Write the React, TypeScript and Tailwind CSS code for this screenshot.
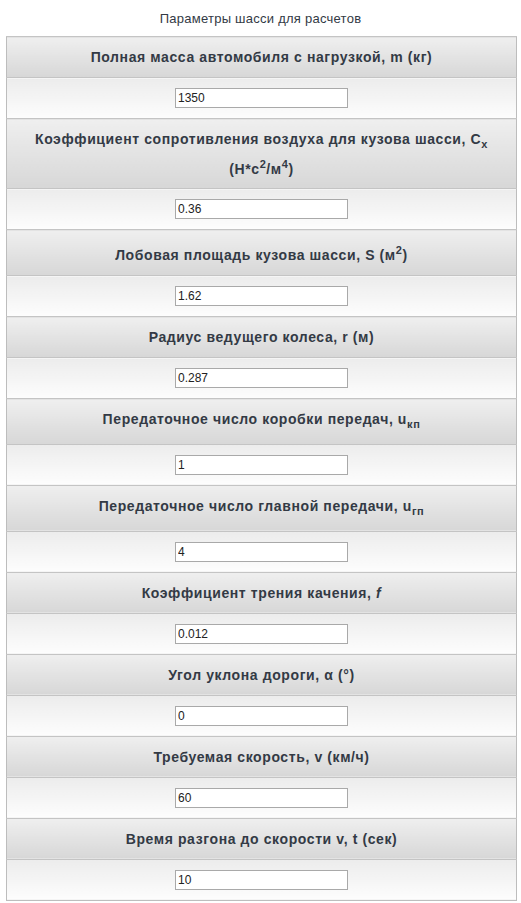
import React from "react";

type Row = { label: React.ReactNode; value: string };

const rows: Row[] = [
  { label: <>Полная масса автомобиля с нагрузкой, m (кг)</>, value: "1350" },
  {
    label: (
      <>
        Коэффициент сопротивления воздуха для кузова шасси, C<sub>x</sub>
        <br />
        (Н*с<sup>2</sup>/м<sup>4</sup>)
      </>
    ),
    value: "0.36",
  },
  { label: <>Лобовая площадь кузова шасси, S (м<sup>2</sup>)</>, value: "1.62" },
  { label: <>Радиус ведущего колеса, r (м)</>, value: "0.287" },
  { label: <>Передаточное число коробки передач, u<sub>кп</sub></>, value: "1" },
  { label: <>Передаточное число главной передачи, u<sub>гп</sub></>, value: "4" },
  { label: <>Коэффициент трения качения, <i>f</i></>, value: "0.012" },
  { label: <>Угол уклона дороги, α (°)</>, value: "0" },
  { label: <>Требуемая скорость, v (км/ч)</>, value: "60" },
  { label: <>Время разгона до скорости v, t (сек)</>, value: "10" },
];

export default function App() {
  return (
    <div className="min-h-screen bg-white font-['Liberation_Sans',Arial,sans-serif] text-[#333a45]">
      <p className="pt-[10px] pb-[9px] text-center text-[13px] leading-[17px] tracking-[0.25px]">Параметры шасси для расчетов</p>
      <table className="ml-[6px] w-[511px] border-collapse border border-[#bdbdbd]">
        <tbody>
          {rows.map((r, i) => (
            <React.Fragment key={i}>
              <tr>
                <th className="border-t border-[#c4c4c4] bg-gradient-to-b from-[#efefef] to-[#d7d7d7] px-2 py-[10px] text-center text-[14px] font-bold leading-[20px] tracking-[0.6px] [&_sub]:static [&_sub]:align-sub [&_sub]:text-[11px] [&_sub]:leading-[20px] [&_sup]:static [&_sup]:align-super [&_sup]:text-[11px] [&_sup]:leading-[20px]">
                  {r.label}
                </th>
              </tr>
              <tr>
                <td className="border-t border-[#c4c4c4] bg-gradient-to-b from-[#ececec] to-[#fdfdfd] py-[10px] text-center leading-[0]">
                  <input
                    type="text"
                    defaultValue={r.value}
                    className="h-[20px] w-[173px] border border-[#a9a9a9] bg-white px-[2px] text-[12px] leading-[18px] text-[#222] outline-none"
                  />
                </td>
              </tr>
            </React.Fragment>
          ))}
        </tbody>
      </table>
    </div>
  );
}
